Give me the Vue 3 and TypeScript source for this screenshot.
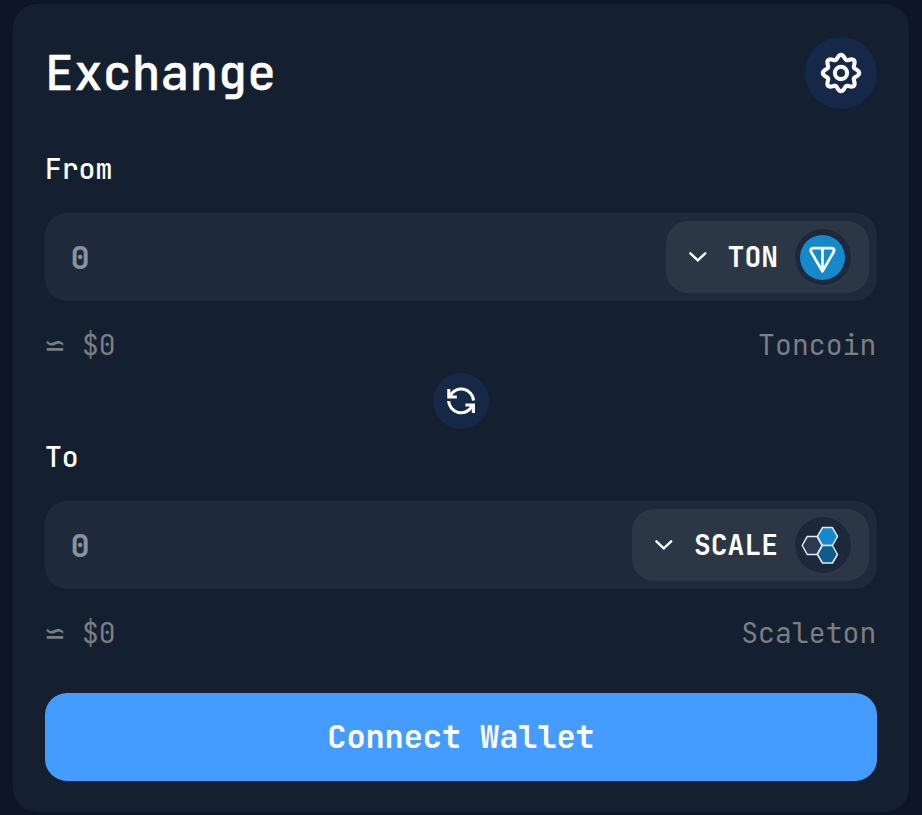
<script setup lang="ts">
interface Side {
  key: 'from' | 'to'
  label: string
  symbol: string
  name: string
}

const from: Side = { key: 'from', label: 'From', symbol: 'TON', name: 'Toncoin' }
const to: Side = { key: 'to', label: 'To', symbol: 'SCALE', name: 'Scaleton' }
const sides: Side[] = [from, to]

// Eight-lobed gear outline centred in a 40x40 box
const gearPath = (): string => {
  const points: string[] = []
  for (let i = 0; i < 144; i++) {
    const a = (i / 144) * Math.PI * 2
    const r = 16.1 + 2.1 * Math.cos(8 * a)
    points.push(`${(20 + r * Math.cos(a)).toFixed(2)} ${(20 + r * Math.sin(a)).toFixed(2)}`)
  }
  return `M${points.join('L')}Z`
}
</script>

<template>
  <main class="page">
    <section class="card">
      <header class="head">
        <h1>Exchange</h1>
        <button class="round settings" aria-label="Settings">
          <svg width="40" height="40" viewBox="0 0 40 40">
            <path :d="gearPath()" />
            <circle cx="20" cy="20" r="6.1" />
          </svg>
        </button>
      </header>

      <template v-for="side in sides" :key="side.key">
        <div class="label" :class="side.key">{{ side.label }}</div>
        <div class="field">
          <span class="amount">0</span>
          <button class="token">
            <svg class="chevron" width="20" height="12" viewBox="0 0 20 12">
              <path d="M2.4 2.3 9.8 9.4 17.2 2.3" />
            </svg>
            <span class="symbol">{{ side.symbol }}</span>
            <span class="coin">
              <svg v-if="side.key === 'from'" width="56" height="56" viewBox="0 0 56 56">
                <circle cx="27.5" cy="28.5" r="22.5" fill="#1489cb" />
                <path
                  d="M18.2 19.2H36.6Q40.2 19.4 38.6 23L27.4 42.4 16.2 23Q14.6 19.4 18.2 19.2ZM27.4 19.2V41"
                  fill="none"
                  stroke="#fff"
                  stroke-width="2.8"
                  stroke-linejoin="round"
                />
              </svg>
              <svg v-else width="56" height="56" viewBox="0 0 56 56">
                <g stroke="#dbeefa" stroke-width="1.5" stroke-linejoin="round">
                  <path d="M7.2 28.5 12.3 19.4H21.9L27 28.5 21.9 37.5H12.3Z" fill="#303752" />
                  <path d="M22.4 19.4 27.5 10.6H37.4L42.5 19.4 37.4 28.5H27.5Z" fill="#1489cb" />
                  <path d="M22.4 37.5 27.5 28.5H37.4L42.5 37.5 37.4 46H27.5Z" fill="#0f5d8c" />
                </g>
              </svg>
            </span>
          </button>
        </div>
        <div class="detail">
          <span class="fiat"><span class="approx">⋍</span>$0</span>
          <span class="name">{{ side.name }}</span>
        </div>
        <button v-if="side.key === 'from'" class="round swap" aria-label="Swap">
          <svg width="32" height="32" viewBox="0 0 32 32">
            <path d="M28.6 15.5A12.5 12.5 0 0 0 5.2 10.5M3.8 4V12H11.8" />
            <path d="M3.6 16A12.5 12.5 0 0 0 26.9 21.5M28.4 28V20H20.4" />
          </svg>
        </button>
      </template>

      <button class="connect">Connect Wallet</button>
    </section>
  </main>
</template>

<style>
body {
  background: #0d1528;
}
</style>

<style scoped>
.page {
  box-sizing: border-box;
  height: 815px;
  padding: 4px 13px 0;
  font-family: 'JetBrains Mono', 'DejaVu Sans Mono', monospace;
  color: #fff;
  overflow: hidden;
}
.card {
  box-sizing: border-box;
  height: 808px;
  padding: 33px 32px 0;
  border-radius: 24px;
  background: #141f30;
  display: flex;
  flex-direction: column;
}
button {
  font: inherit;
  color: inherit;
  border: 0;
  padding: 0;
}
.head {
  display: flex;
  justify-content: space-between;
  height: 72px;
}
h1 {
  margin: 0;
  font-size: 48px;
  line-height: 72px;
  font-weight: 500;
  letter-spacing: 0.08px;
  -webkit-text-stroke: 0.4px #fff;
}
.round {
  display: flex;
  align-items: center;
  justify-content: center;
  border-radius: 50%;
  background: #162848;
}
.round svg {
  fill: none;
  stroke: #fff;
}
.settings {
  width: 72px;
  height: 72px;
}
.settings svg {
  stroke-width: 4.1;
  stroke-linejoin: round;
  overflow: visible;
}
.swap {
  width: 56px;
  height: 56px;
  align-self: center;
  margin-top: 8px;
}
.swap svg {
  stroke-width: 3.1;
}
.label {
  height: 40px;
  line-height: 40px;
  font-size: 28px;
  font-weight: 500;
}
.label.from {
  margin-top: 40px;
}
.label.to {
  margin-top: 8px;
}
.field {
  margin-top: 24px;
  height: 88px;
  box-sizing: border-box;
  padding: 8px 8px 8px 25.5px;
  border-radius: 22px;
  background: #1e2939;
  display: flex;
  align-items: center;
  justify-content: space-between;
}
.amount {
  font-size: 32px;
  font-weight: 700;
  color: #8b92a1;
}
.token {
  height: 72px;
  padding: 0 18px 0 22px;
  border-radius: 22px;
  background: #2c3745;
  display: flex;
  align-items: center;
}
.chevron {
  fill: none;
  stroke: #fff;
  stroke-width: 2.4;
  stroke-linecap: round;
}
.symbol {
  margin: 0 17px 0 20px;
  font-size: 28px;
  line-height: 40px;
  font-weight: 700;
}
.coin {
  width: 56px;
  height: 56px;
  border-radius: 50%;
  background: #1d283a;
}
.coin svg {
  display: block;
}
.detail {
  margin-top: 24px;
  height: 40px;
  line-height: 40px;
  display: flex;
  justify-content: space-between;
  font-size: 28px;
  color: #7b7e82;
}
.fiat {
  display: flex;
}
.name {
  letter-spacing: 0.1px;
  padding-right: 0.6px;
}
.approx {
  width: 37px;
  font-family: 'DejaVu Sans', sans-serif;
  font-size: 26px;
  transform: scaleY(1.2);
  text-indent: -1px;
}
.connect {
  margin-top: 40px;
  height: 88px;
  border-radius: 22px;
  background: #459cff;
  font-size: 32px;
  line-height: 88px;
  font-weight: 600;
  letter-spacing: -0.1px;
}
</style>
